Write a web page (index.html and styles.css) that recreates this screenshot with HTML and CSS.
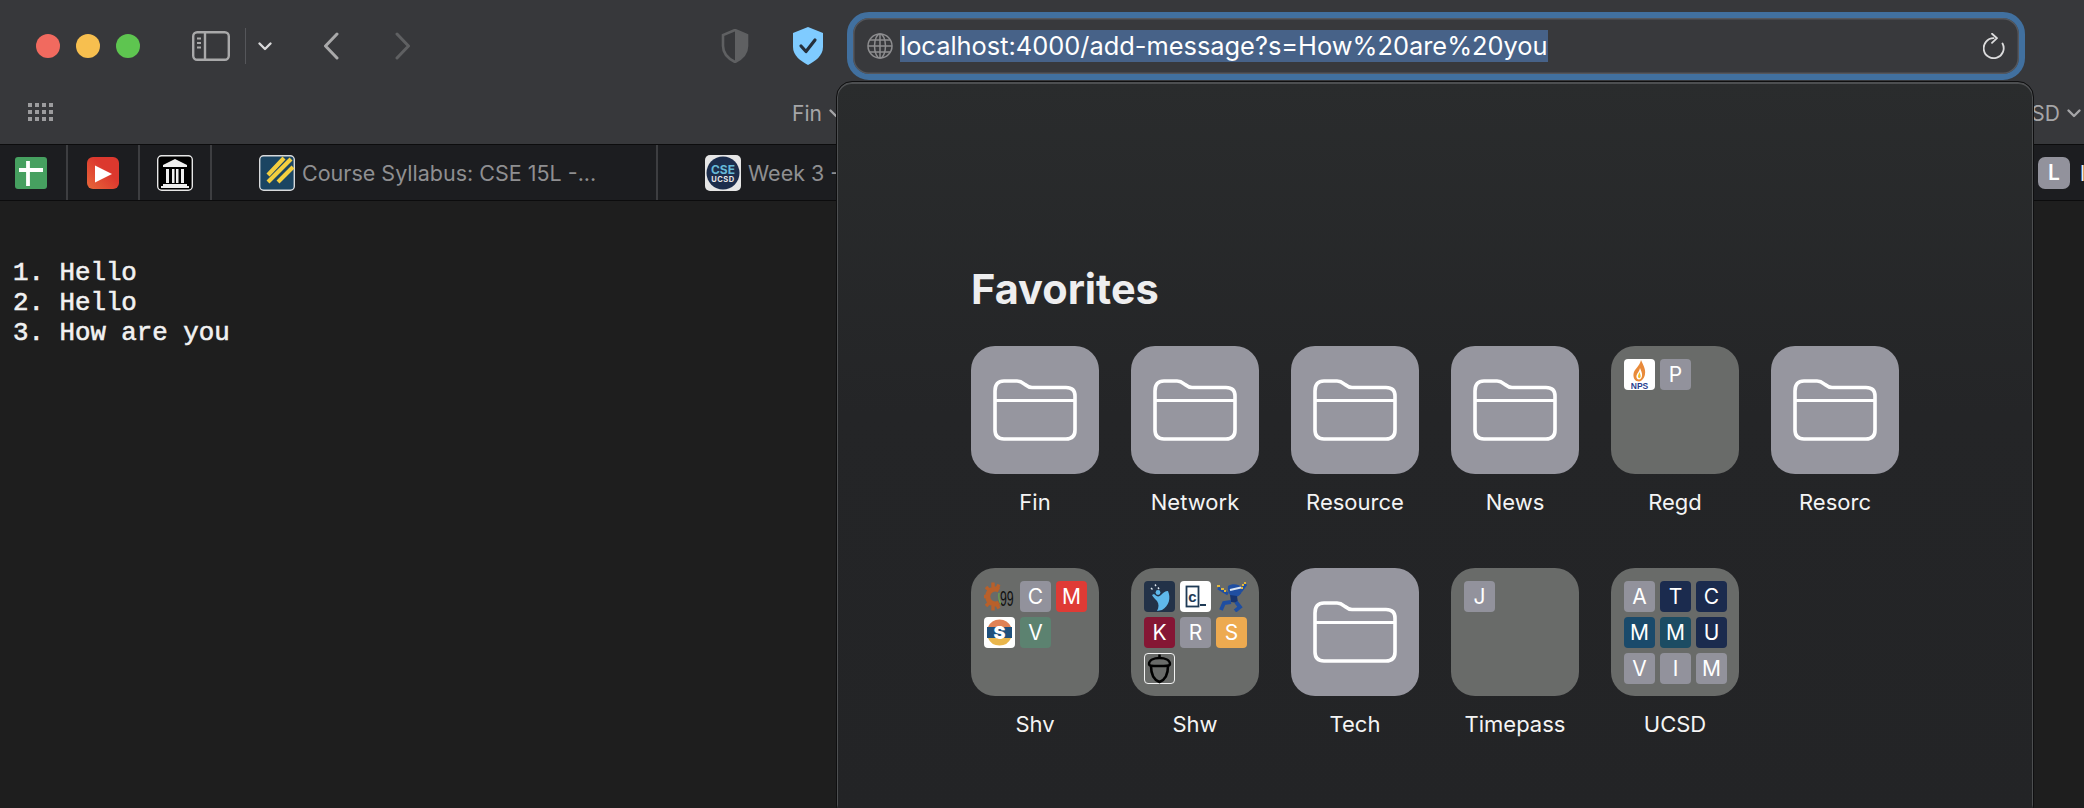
FILE: index.html
```html
<!DOCTYPE html>
<html lang="en">
<head>
<meta charset="utf-8">
<title>localhost:4000/add-message</title>
<link rel="stylesheet" href="styles.css">
</head>
<body>
<svg class="defs" width="0" height="0" aria-hidden="true">
  <symbol id="folder" viewBox="0 0 84 62">
    <path d="M2 12Q2 2 11 2H24C28 2 29.500 3.500 32 5.500C34.500 7.500 36 8.500 39 8.500H73Q82 8.500 82 17V51Q82 60 73 60H11Q2 60 2 51Z" fill="none" stroke="#fff" stroke-width="3.600"/>
    <path d="M2 21.500H82" stroke="#fff" stroke-width="3"/>
  </symbol>
  <symbol id="chev" viewBox="0 0 16 10">
    <path d="M2.500 2.500L8 8L13.500 2.500" fill="none" stroke="currentColor" stroke-width="2.400" stroke-linecap="round" stroke-linejoin="round"/>
  </symbol>
</svg>
<div class="window">
  <header class="toolbar">
    <div class="top-row">
      <div class="lights"><span class="dot red"></span><span class="dot yellow"></span><span class="dot green"></span></div>
      <svg class="sidebar-icon" viewBox="0 0 38 30"><rect x="1.200" y="1.200" width="35.600" height="27.600" rx="4" fill="none" stroke="#a9a9aa" stroke-width="2.400"/><path d="M13 1V29" stroke="#a9a9aa" stroke-width="2.400"/><path d="M5 7.500H9M5 12H9M5 16.500H9" stroke="#a9a9aa" stroke-width="1.800"/></svg>
      <span class="tool-divider"></span>
      <svg class="side-chev"><use href="#chev"/></svg>
      <svg class="nav back" viewBox="0 0 16 28"><path d="M14 2L2.500 14L14 26" fill="none" stroke="#a9a9aa" stroke-width="3" stroke-linecap="round" stroke-linejoin="round"/></svg>
      <svg class="nav forward" viewBox="0 0 16 28"><path d="M2 2L13.500 14L2 26" fill="none" stroke="#5f6062" stroke-width="3" stroke-linecap="round" stroke-linejoin="round"/></svg>
      <svg class="shield-gray" viewBox="0 0 28 34"><path d="M14 1L26 6V17C26 25 20 30 14 33C8 30 2 25 2 17V6Z" fill="none" stroke="#5f6062" stroke-width="2.600"/><path d="M14 1L26 6V17C26 25 20 30 14 33Z" fill="#5f6062"/></svg>
      <svg class="shield-blue" viewBox="0 0 32 38"><path d="M16 0L31 6V20C31 29 23 34 16 38C9 34 1 29 1 20V6Z" fill="#7fcbff"/><path d="M9 19L14 24.500L23 13" fill="none" stroke="#26303c" stroke-width="3.200" stroke-linecap="round" stroke-linejoin="round"/></svg>
      <div class="url-bar">
        <svg class="globe" viewBox="0 0 26 26"><g fill="none" stroke="#8d8d8f" stroke-width="1.500"><circle cx="13" cy="13" r="12"/><ellipse cx="13" cy="13" rx="5.500" ry="12"/><path d="M13 1V25M1 13H25M2.800 7H23.200M2.800 19H23.200"/></g></svg>
        <span class="url-text">localhost:4000/add-message?s=How%20are%20you</span>
        <svg class="reload" viewBox="0 0 22 26"><path d="M10.500 5.200A10 10 0 1 0 19.500 10.500" fill="none" stroke="#dcdcdd" stroke-width="1.800" stroke-linecap="round"/><path d="M9 .8L14 5.200L9 9.800" fill="none" stroke="#dcdcdd" stroke-width="1.800" stroke-linecap="round" stroke-linejoin="round"/></svg>
      </div>
    </div>
    <nav class="bookmarks">
      <svg class="apps" viewBox="0 0 25 18"><g fill="#9c9c9e"><rect x="0" y="0" width="4" height="4"/><rect x="7" y="0" width="4" height="4"/><rect x="14" y="0" width="4" height="4"/><rect x="21" y="0" width="4" height="4"/><rect x="0" y="7" width="4" height="4"/><rect x="7" y="7" width="4" height="4"/><rect x="14" y="7" width="4" height="4"/><rect x="21" y="7" width="4" height="4"/><rect x="0" y="14" width="4" height="4"/><rect x="7" y="14" width="4" height="4"/><rect x="14" y="14" width="4" height="4"/><rect x="21" y="14" width="4" height="4"/></g></svg>
      <span class="bm bm-fin">Fin <svg class="bm-chev"><use href="#chev"/></svg></span>
      <span class="bm bm-ucsd">UCSD <svg class="bm-chev"><use href="#chev"/></svg></span>
    </nav>
  </header>

  <div class="tabs">
    <div class="tab pinned first"><svg class="fav" viewBox="0 0 32 32"><rect width="32" height="32" rx="3" fill="#46a060"/><path d="M13 4V29M4 13H28" stroke="#fff" stroke-width="3.800"/></svg></div>
    <div class="tab pinned"><svg class="fav" viewBox="0 0 32 32"><defs><linearGradient id="yt" x1="0" y1="1" x2="1" y2="0"><stop offset="0" stop-color="#e8683a"/><stop offset=".6" stop-color="#dc382e"/></linearGradient></defs><rect width="32" height="32" rx="6" fill="url(#yt)"/><path d="M8 8.500L25 17L8 25.500Z" fill="#fff"/></svg></div>
    <div class="tab pinned"><svg class="fav-lg" viewBox="0 0 36 36"><rect x=".700" y=".700" width="34.600" height="34.600" rx="4" fill="#000" stroke="#e6e6e6" stroke-width="1.400"/><path d="M18 4L30 10V12H6V10Z" fill="#eee"/><path d="M9 14h3v14H9zM15 14h2.500v14H15zM19 14h2.500v14H19zM24 14h3v14h-3z" fill="#eee"/><path d="M6 29H30V31H32V33H4V31H6Z" fill="#eee"/></svg></div>
    <div class="tab titled course">
      <svg class="fav-lg" viewBox="0 0 36 36"><rect x=".700" y=".700" width="34.600" height="34.600" rx="4" fill="#1b4562" stroke="#d8dadc" stroke-width="1.400"/><path d="M9 20L25 3M9 27L32 4M19 27L34 12" stroke="#f4cf3f" stroke-width="4.200" fill="none"/></svg>
      <span class="tab-title">Course Syllabus: CSE 15L -...</span>
    </div>
    <div class="tab titled week">
      <svg class="fav-lg" viewBox="0 0 36 36"><rect width="36" height="36" rx="5" fill="#e6e6e6"/><circle cx="18" cy="18" r="16.500" fill="#1c2d4c"/><text class="fav-cse" x="18" y="19" text-anchor="middle">CSE</text><text class="fav-ucsd" x="18" y="27" text-anchor="middle">UCSD</text></svg>
      <span class="tab-title">Week 3 -</span>
    </div>
    <div class="tab titled last"><span class="mini fav-l">L</span><span class="tab-title bright">l</span></div>
  </div>

  <main class="page">
    <pre class="message">1. Hello
2. Hello
3. How are you</pre>
  </main>

  <section class="popup">
    <h2 class="fav-heading">Favorites</h2>
    <div class="tile-grid">
      <a class="item"><span class="tile plain"><svg class="folder"><use href="#folder"/></svg></span><span class="label">Fin</span></a>
      <a class="item"><span class="tile plain"><svg class="folder"><use href="#folder"/></svg></span><span class="label">Network</span></a>
      <a class="item"><span class="tile plain"><svg class="folder"><use href="#folder"/></svg></span><span class="label">Resource</span></a>
      <a class="item"><span class="tile plain"><svg class="folder"><use href="#folder"/></svg></span><span class="label">News</span></a>
      <a class="item"><span class="tile group">
        <svg class="mini-svg" viewBox="0 0 31 31"><rect width="31" height="31" rx="4" fill="#fff"/><path d="M17 1C19 6 22 10 21 15C20.500 19 18 22 15 22.500C11 22.500 9 19 9.500 15C10 10 16 7 17 1Z" fill="#e88a3a"/><path d="M16 9C17 12 18.500 14 18 17C17.500 19 16.500 20.500 15 20.500C13 20.500 12 18.500 12.500 16.500C13 14 15.500 12.500 16 9Z" fill="#fff"/><path d="M15.500 13C16 15 17 16 16.600 18C16 19.500 14.500 19.500 14 18C13.800 16 15 15 15.500 13Z" fill="#f4c02e"/><text class="nps" x="15.500" y="30" text-anchor="middle">NPS</text></svg>
        <span class="mini c-gray">P</span>
      </span><span class="label">Regd</span></a>
      <a class="item"><span class="tile plain"><svg class="folder"><use href="#folder"/></svg></span><span class="label">Resorc</span></a>

      <a class="item"><span class="tile group">
        <svg class="mini-svg" viewBox="0 0 31 31"><path d="M15 9A7.500 7.500 0 1 0 15 22" fill="none" stroke="#b9602a" stroke-width="5"/><path d="M9 1.500V6M9 25V29.500M0 15.500H3M2 6L5 9M2 25L5 22M15 3.500L13 7M15 27.500L13 24" stroke="#b9602a" stroke-width="3.400"/><path d="M15 12C14.500 16 15 20 17 23" fill="none" stroke="#6da84a" stroke-width="1.200"/><text class="ninety" transform="translate(16 25) scale(.56 1)" x="0" y="0">99</text></svg>
        <span class="mini c-gray">C</span>
        <span class="mini c-red">M</span>
        <svg class="mini-svg" viewBox="0 0 31 31"><rect width="31" height="31" rx="4" fill="#fff"/><path d="M4 10A12.500 12.500 0 0 1 27 10Z" fill="#e08256"/><path d="M3 10H28V21H3Z" fill="#20507c"/><path d="M4 21A12.500 12.500 0 0 0 27 21Z" fill="#e9b64c"/><text class="s-mark" x="15.500" y="22" text-anchor="middle">S</text></svg>
        <span class="mini c-green">V</span>
      </span><span class="label">Shv</span></a>

      <a class="item"><span class="tile group">
        <svg class="mini-svg" viewBox="0 0 31 31"><rect width="31" height="31" rx="4" fill="#233248"/><path d="M24 10C27 17 25 25 18 29L13 30C15 26 15 23 13 20C11 18 9 16 8 14L10 13C13 16 15 16 17 14C19 12 21 10 24 10Z" fill="#5fb8ea"/><circle cx="14" cy="11.500" r="2.400" fill="#5fb8ea"/><path d="M7 7L8.500 8.500M11 3.500L12 5M14 6.500L15 8" stroke="#dfe7ef" stroke-width="1.400"/></svg>
        <svg class="mini-svg" viewBox="0 0 31 31"><rect width="31" height="31" rx="4" fill="#fff"/><rect x="6.500" y="5.500" width="12" height="20" fill="none" stroke="#1f3b56" stroke-width="1.800"/><text class="c-mark" x="12.500" y="21" text-anchor="middle">c</text><path d="M20 24H26" stroke="#1f3b56" stroke-width="2"/></svg>
        <svg class="mini-svg" viewBox="0 0 31 31"><path d="M12 5C16 2 24 3 26 7C27 11 24 15 20 16C16 17 11 13 12 5Z" fill="#1f4ea1"/><path d="M14 9L25 6.500" stroke="#dbe5f2" stroke-width="2"/><path d="M2 7L12 13M25 10L30 3" stroke="#1f4ea1" stroke-width="3" fill="none"/><path d="M14 14L21 15L22 22L15 21Z" fill="#17346f"/><path d="M15 21L8 22L5 29M20 21L24 26L19 30" stroke="#1f4ea1" stroke-width="3.800" fill="none"/><path d="M1 5H4M5 8H8M8 10H10M25 7H27M28 2H30M26 4H28" stroke="#e0b63c" stroke-width="2"/></svg>
        <span class="mini c-maroon">K</span>
        <span class="mini c-gray">R</span>
        <span class="mini c-orange">S</span>
        <svg class="mini-svg" viewBox="0 0 31 31"><rect x=".500" y=".500" width="30" height="30" rx="3.500" fill="none" stroke="#f2f2f2"/><path d="M15.500 1.500V5" stroke="#000" stroke-width="2.500"/><path d="M5 11C5 7 10 5 15.500 5C21 5 26 7 26 11C26 13 24 13 15.500 13C7 13 5 13 5 11Z" fill="none" stroke="#000" stroke-width="2.400"/><path d="M7 13C7 21 10 27 15.500 29C21 27 24 21 24 13" fill="none" stroke="#000" stroke-width="2.600"/></svg>
      </span><span class="label">Shw</span></a>

      <a class="item"><span class="tile plain"><svg class="folder"><use href="#folder"/></svg></span><span class="label">Tech</span></a>

      <a class="item"><span class="tile group"><span class="mini c-gray">J</span></span><span class="label">Timepass</span></a>

      <a class="item"><span class="tile group">
        <span class="mini c-gray">A</span>
        <span class="mini c-navy">T</span>
        <span class="mini c-navy">C</span>
        <span class="mini c-blue">M</span>
        <span class="mini c-teal">M</span>
        <span class="mini c-navy">U</span>
        <span class="mini c-gray">V</span>
        <span class="mini c-gray">I</span>
        <span class="mini c-gray">M</span>
      </span><span class="label">UCSD</span></a>
    </div>
  </section>
</div>
</body>
</html>
```
FILE: styles.css
```css
* { box-sizing: border-box; }
html, body { margin: 0; padding: 0; height: 100%; }
body { background: #1e1e1e; overflow: hidden; font-family: Inter, "Liberation Sans", sans-serif; }
.defs { position: absolute; }
.window { position: relative; width: 2084px; height: 808px; overflow: hidden; display: flex; flex-direction: column; }

/* Toolbar */
.toolbar { height: 145px; background: #37383b; border-bottom: 1px solid #0c0c0d; display: flex; flex-direction: column; flex: none; }
.top-row { height: 92px; display: flex; align-items: center; padding-left: 36px; flex: none; }
.lights { display: flex; gap: 16px; }
.dot { width: 24px; height: 24px; border-radius: 50%; display: block; }
.red { background: #f16a5f; }
.yellow { background: #f7bf4f; }
.green { background: #5ec550; }
.sidebar-icon { width: 38px; height: 30px; margin-left: 52px; }
.tool-divider { width: 1px; height: 36px; background: #55565a; margin-left: 15px; }
.side-chev { width: 16px; height: 10px; margin-left: 11px; color: #d9d9da; }
.nav { width: 16px; height: 28px; }
.back { margin-left: 50px; }
.forward { margin-left: 56px; }
.shield-gray { width: 28px; height: 34px; margin-left: 310px; }
.shield-blue { width: 32px; height: 38px; margin-left: 43px; }
.url-bar { width: 1178px; height: 68px; margin-left: 23px; border: 6px solid #41709f; border-radius: 22px; background: #38393c; box-shadow: inset 0 0 0 1.500px #55575c; display: flex; align-items: center; padding: 0 14px; }
.globe { width: 26px; height: 26px; flex: none; }
.url-text { margin-left: 7px; background: #476288; color: #fff; font-size: 25.400px; line-height: 32px; height: 32px; white-space: nowrap; }
.reload { width: 22px; height: 26px; margin-left: auto; flex: none; }

.bookmarks { flex: 1; display: flex; align-items: center; padding-left: 28px; padding-right: 2px; color: #a6a6a8; font-size: 21px; padding-bottom: 10px; }
.apps { width: 25px; height: 18px; flex: none; margin-bottom: 2px; }
.bm { display: inline-flex; align-items: center; gap: 6px; white-space: nowrap; }
.bm-fin { margin-left: 739px; }
.bm-ucsd { margin-left: auto; }
.bm-chev { width: 16px; height: 10px; }

/* Tabs */
.tabs { height: 56px; background: #1c1d20; border-bottom: 1px solid #0c0c0d; display: flex; flex: none; overflow: hidden; }
.tab { display: flex; align-items: center; height: 100%; border-right: 2px solid #3d3e41; flex: none; }
.pinned { width: 72px; justify-content: center; }
.pinned.first { width: 68px; padding-right: 5px; }
.fav { width: 32px; height: 32px; flex: none; }
.fav-lg { width: 36px; height: 36px; flex: none; }
.titled { padding-left: 47px; gap: 7px; }
.course { width: 446px; }
.week { flex: 1; min-width: 0; }
.last { width: 91px; padding-left: 45px; border-right: 0; gap: 10px; }
.tab-title { font-size: 21.500px; color: #8f8f91; white-space: nowrap; }
.tab-title.bright { color: #eee; }
.fav-cse { font: 700 12px Inter, sans-serif; fill: #66b9d8; }
.fav-ucsd { font: 700 7.500px Inter, sans-serif; fill: #e8e8e8; letter-spacing: .5px; }

/* Page */
.page { flex: 1; background: #1e1e1e; }
.message { margin: 0; padding: 58px 0 0 13px; font: 400 25.800px/30px "Liberation Mono", monospace; color: #f1f1f1; -webkit-text-stroke: .6px #f1f1f1; }

/* Start page popup */
.popup { position: absolute; left: 836px; top: 81px; width: 1198px; height: 740px; border: 1px solid #0f0f10; border-radius: 16px; background: linear-gradient(180deg, #2a2c2d 0, #242527 45%, #232426 100%); box-shadow: inset 0 1px 0 1px #4d4f51; padding: 182px 0 0 134px; }
.fav-heading { margin: 0 0 32px; font-size: 41.500px; line-height: 50px; font-weight: 700; color: #eeeeef; }
.tile-grid { display: grid; grid-template-columns: repeat(6, 128px); column-gap: 32px; row-gap: 48px; }
.item { display: flex; flex-direction: column; align-items: center; }
.tile { width: 128px; height: 128px; border-radius: 24px; }
.plain { background: #96969f; display: flex; align-items: center; justify-content: center; }
.folder { width: 84px; height: 62px; }
.group { background: #696b69; display: grid; grid-template-columns: repeat(3, 31px); grid-auto-rows: 31px; gap: 5px; padding: 13px; align-content: start; }
.label { margin-top: 10px; height: 36px; font-size: 22px; line-height: 36px; font-weight: 400; color: #f4f4f4; white-space: nowrap; }

.mini { width: 31px; height: 31px; border-radius: 4px; display: flex; align-items: center; justify-content: center; color: #fff; font-size: 21px; line-height: 1; }
.mini-svg { width: 31px; height: 31px; display: block; }
.fav-l { width: 32px; height: 32px; border-radius: 7px; background: #92929c; flex: none; font-weight: 600; }
.c-gray { background: #92929c; }
.c-red { background: #df3b35; }
.c-green { background: #5c8270; }
.c-maroon { background: #851634; }
.c-orange { background: #edaa50; }
.c-navy { background: #1b2b4e; }
.c-blue { background: #1a4a6b; }
.c-teal { background: #1c4c63; }
.nps { font: 800 8.500px "Liberation Sans", sans-serif; fill: #2a3f8f; }
.ninety { font: 400 22px "Liberation Sans", sans-serif; fill: #111; }
.s-mark { font: 900 18px Inter, sans-serif; fill: #fff; }
.c-mark { font: 700 15px "Liberation Mono", monospace; fill: #1f3b56; }
```
